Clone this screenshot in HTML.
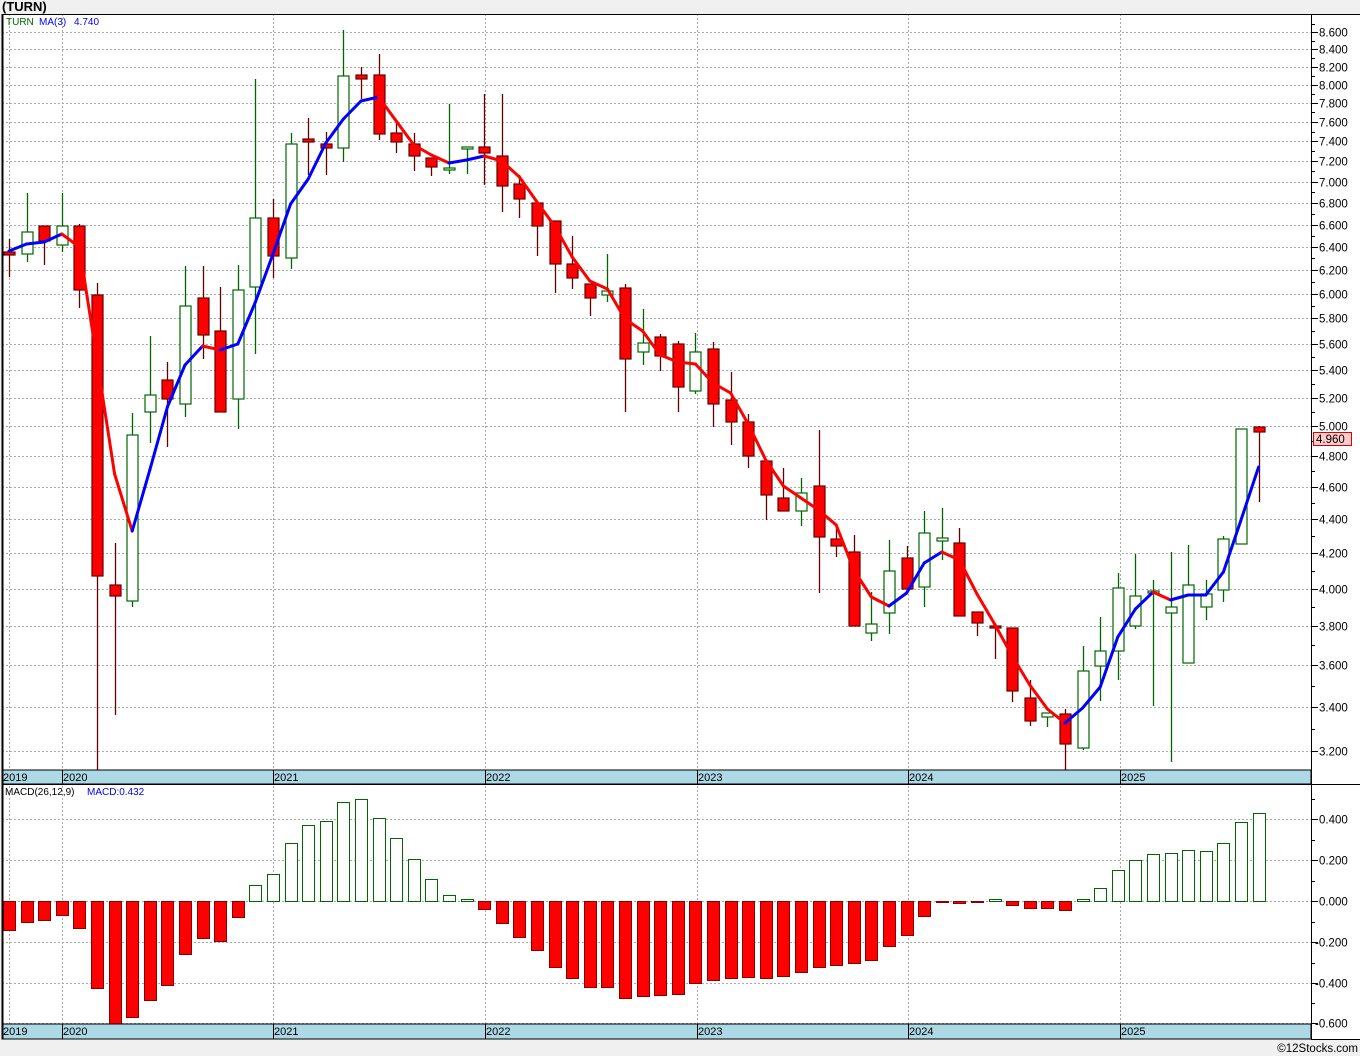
<!DOCTYPE html>
<html><head><meta charset="utf-8"><style>
html,body{margin:0;padding:0;background:#f0f0f0;width:1360px;height:1056px;overflow:hidden}
svg{display:block}
text{font-family:"Liberation Sans",sans-serif}
</style></head><body>
<svg id="s" width="1360" height="1056" xmlns="http://www.w3.org/2000/svg"></svg>
<script>
var C=[
['r',252,255,239,277],['g',232,254,193,262],['r',226,241,226,265],['g',226,245,193,252],['r',226,290,224,308],
['r',295,576,283,770],['r',585,596,543,715],['g',435,601,413,607],['g',395,412,336,443],['r',380,399,362,447],
['g',306,404,266,417],['r',298,335,266,359],['r',331,412,287,412],['g',290,399,265,429],['g',218,287,79,354],
['r',218,256,199,278],['g',144,258,133,269],['r',139,142,118,175],['r',144,148,132,175],['g',76,148,30,162],
['r',75,79,67,99],['r',75,134,54,140],['r',133,142,120,153],['r',144,156,133,171],['r',158,167,158,176],
['g',168,170,104,174],['g',147,148,147,174],['r',147,153,94,185],['r',156,186,94,212],['r',184,199,175,218],
['r',203,226,203,256],['r',221,264,221,293],['r',264,278,236,289],['r',284,298,284,316],['g',291,295,254,302],
['r',288,359,284,412],['g',343,352,309,365],['r',337,356,334,371],['r',344,387,341,412],['g',352,391,333,394],
['r',349,404,342,427],['r',400,422,372,445],['r',422,456,414,468],['r',461,495,461,520],['r',498,511,468,511],
['g',493,511,478,526],['r',486,537,430,593],['r',539,546,526,557],['r',552,626,535,626],['g',624,633,592,641],
['g',571,613,540,634],['r',558,589,546,589],['g',533,587,511,607],['g',538,541,508,560],['r',543,616,528,616],
['r',612,623,612,636],['r',626,628,626,659],['r',628,691,628,702],['r',698,721,680,726],['g',713,717,713,727],
['r',714,744,709,770],['g',671,748,646,750],['g',651,666,617,701],['g',588,651,573,680],['g',596,626,554,629],
['g',591,593,580,706],['g',607,613,552,762],['g',585,663,545,663],['g',594,607,580,620],['g',539,590,536,602],
['g',429,544,429,544],['r',427,432,426,502]];
var MA=[251,244,242,234,247,360,474,531,470,407,365,346,350,344,302,254,204,179,143,119,101,97,121,145,155,163,160,156,161,177,202,226,257,281,289,319,331,355,362,364,383,393,424,460,486,498,510,525,570,597,606,593,563,552,560,594,624,656,685,709,723,708,687,637,609,592,600,595,595,572,520,467];
var M=[930,922,920,915,928,988,1024,1017,1000,985,954,938,941,917,885,874,843,825,821,802,799,818,838,859,879,895,899,909,923,937,950,967,978,987,987,998,996,995,994,983,980,978,977,978,976,972,967,965,963,960,946,935,916,902,903,902,899,905,908,908,910,899,888,870,860,854,853,850,851,843,822,813];
function X(i){return 9+17.6*i}
var o='';
o+='<rect x="2" y="14" width="1309" height="770" fill="#fff"/>';
o+='<rect x="2" y="784" width="1309" height="255" fill="#fff"/>';
o+='<rect x="1311" y="14" width="49" height="1026" fill="#fff"/>';
function Y(p){return 32+(Math.log(8.6)-Math.log(p))*727.3}
for(var k=16;k<=43;k++){var p=k*0.2,y=Math.round(Y(p))+.5;
o+='<line x1="2" x2="1311" y1="'+y+'" y2="'+y+'" stroke="#aaa" stroke-dasharray="2,2"/>';
o+='<line x1="1311" x2="1318" y1="'+y+'" y2="'+y+'" stroke="#000"/>';
o+='<text x="1319" y="'+(y+4)+'" font-size="11.5" fill="#000">'+p.toFixed(3)+'</text>';
var ym=Math.round(Y(p+0.1))+.5;o+='<line x1="1311" x2="1315" y1="'+ym+'" y2="'+ym+'" stroke="#000"/>';}
for(var v=-0.6;v<=0.41;v+=0.2){var y=Math.round(901-v*204)+.5;
o+='<line x1="2" x2="1311" y1="'+y+'" y2="'+y+'" stroke="#aaa" stroke-dasharray="2,2"/>';
o+='<line x1="1311" x2="1318" y1="'+y+'" y2="'+y+'" stroke="#000"/>';
var t=(Math.abs(v)<1e-6?0:v).toFixed(3);o+='<text x="'+(t[0]=='-'?1315:1319)+'" y="'+(y+4)+'" font-size="11.5" fill="#000">'+t+'</text>';
var ym=y-20;o+='<line x1="1311" x2="1315" y1="'+ym+'" y2="'+ym+'" stroke="#000"/>';}
var yl=[[9,''],[62,'2020'],[273,'2021'],[485,'2022'],[697,'2023'],[908,'2024'],[1120,'2025']];
yl.forEach(function(a){o+='<line x1="'+(a[0]+.5)+'" x2="'+(a[0]+.5)+'" y1="14" y2="1024" stroke="#aaa" stroke-dasharray="2,2"/>';});
// candles
C.forEach(function(c,i){var x=Math.round(X(i));var col=c[0]=='r'?'#600':'#060';
o+='<line x1="'+(x+.5)+'" x2="'+(x+.5)+'" y1="'+c[3]+'" y2="'+c[4]+'" stroke="'+col+'" stroke-width="1.3"/>';
var h=Math.max(c[2]-c[1],2);
o+='<rect x="'+(x-5)+'" y="'+c[1]+'" width="11" height="'+h+'" fill="'+(c[0]=='r'?'#f00':'#fff')+'" stroke="'+(c[0]=='r'?'#600':'#060')+'" stroke-width="1.2"/>';});
for(var i=0;i<MA.length-1;i++){var col=MA[i+1]>MA[i]?'#f00':'#00f';
o+='<line x1="'+X(i)+'" y1="'+MA[i]+'" x2="'+X(i+1)+'" y2="'+MA[i+1]+'" stroke="'+col+'" stroke-width="3" stroke-linecap="round"/>';}
// MACD
M.forEach(function(v,i){var x=Math.round(X(i))-6;var red=v>901;var y0=red?901:v,h=Math.abs(v-901);if(h<1)h=1;
o+='<rect x="'+(x+.5)+'" y="'+(y0+.5)+'" width="12" height="'+h+'" fill="'+(red?'#f00':'#fff')+'" stroke="'+(red?'#800':'#060')+'"/>';});
// date bands
[[770,784],[1024,1039]].forEach(function(b){o+='<rect x="2" y="'+b[0]+'" width="1309" height="'+(b[1]-b[0])+'" fill="#add8e6" stroke="#000"/>';
o+='<text x="3" y="'+(b[0]+11)+'" font-size="11">2019</text>';
yl.slice(1).forEach(function(a){o+='<line x1="'+(a[0]+.5)+'" x2="'+(a[0]+.5)+'" y1="'+b[0]+'" y2="'+b[1]+'" stroke="#000"/>';o+='<text x="'+(a[0]+1)+'" y="'+(b[0]+11)+'" font-size="11">'+a[1]+'</text>';});});
o+='<line x1="2.5" x2="2.5" y1="14" y2="1039" stroke="#000" stroke-width="2"/>';
o+='<line x1="1311.5" x2="1311.5" y1="14" y2="1039" stroke="#000"/>';
o+='<line x1="2" x2="1360" y1="14.5" y2="14.5" stroke="#000"/>';
o+='<line x1="2" x2="1360" y1="784.5" y2="784.5" stroke="#000"/>';
o+='<line x1="1311" x2="1360" y1="1039.5" y2="1039.5" stroke="#000"/>';
o+='<rect x="1313.5" y="432.5" width="38" height="13" fill="#ffcccc" stroke="#d00"/><text x="1316" y="443" font-size="11.5" fill="#000">4.960</text>';
o+='<text x="2" y="11" font-size="13" font-weight="bold">(TURN)</text>';
o+='<text x="6" y="25" font-size="10" fill="#060">TURN</text><text x="39" y="25" font-size="10" fill="#00f">MA(3)</text><text x="74" y="25" font-size="10" fill="#00f">4.740</text>';
o+='<text x="5" y="795" font-size="10" fill="#000">MACD(26,12,9)</text><text x="87" y="795" font-size="10" fill="#00f">MACD:0.432</text>';
o+='<text x="1358" y="1052" font-size="11.5" text-anchor="end" fill="#000">©12Stocks.com</text>';
document.getElementById('s').innerHTML=o;
</script>
</body></html>
